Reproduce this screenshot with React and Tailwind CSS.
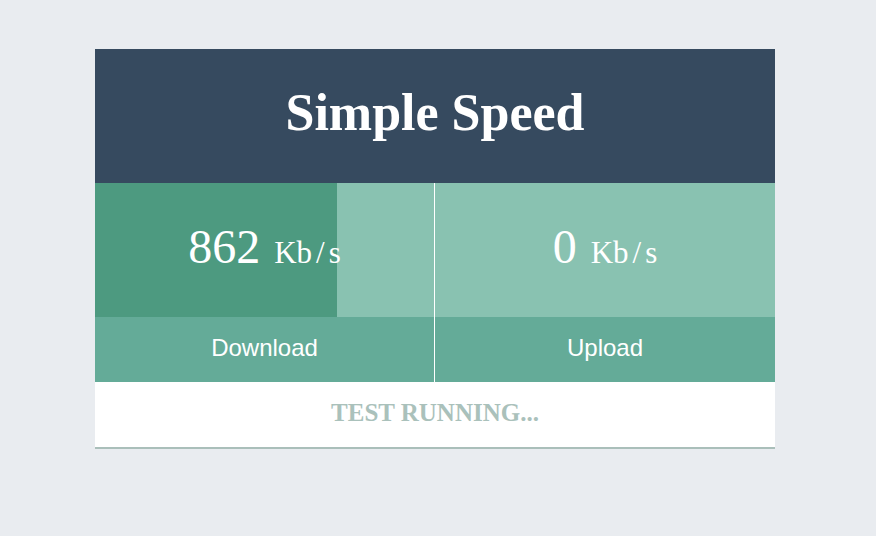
export default function App() {
  const progress = 242 // px of 339 download cell
  const Unit = () => (
    <span className="text-[31px] leading-none ml-[14px]">
      Kb<span className="mx-[4px]">/</span>s
    </span>
  )
  return (
    <div className="min-h-[536px] w-full bg-[#e9ecf0] pt-[49px]" style={{ fontFamily: '"Liberation Serif", serif' }}>
      <div className="w-[680px] ml-[95px]">
        {/* header */}
        <div className="h-[134px] bg-[#364a5f] flex items-center justify-center">
          <h1 className="text-white font-bold text-[52px] leading-none pb-[6px]">Simple Speed</h1>
        </div>

        {/* stats */}
        <div className="flex">
          <div className="w-[339px] flex flex-col">
            <div className="relative h-[134px] bg-[#89c2b1]">
              <div className="absolute left-0 top-0 h-full bg-[#4d9a80]" style={{ width: progress }} />
              <div className="relative h-full flex items-baseline justify-center text-white pt-[40px]">
                <span className="text-[48px] leading-none">862</span>
                <Unit />
              </div>
            </div>
            <div className="h-[65px] bg-[#64ab98] flex items-center justify-center text-white text-[24px] pb-[3px]" style={{ fontFamily: '"Liberation Sans", sans-serif' }}>
              Download
            </div>
          </div>
          <div className="w-px bg-white" />
          <div className="flex-1 flex flex-col">
            <div className="h-[134px] bg-[#89c2b1] flex items-baseline justify-center text-white pt-[40px]">
              <span className="text-[48px] leading-none">0</span>
              <Unit />
            </div>
            <div className="h-[65px] bg-[#64ab98] flex items-center justify-center text-white text-[24px] pb-[3px]" style={{ fontFamily: '"Liberation Sans", sans-serif' }}>
              Upload
            </div>
          </div>
        </div>

        {/* footer */}
        <div className="h-[67px] bg-white border-b-2 border-[#aabfba] flex items-center justify-center pb-[5px]">
          <span className="text-[#aac1bb] font-bold text-[25px] leading-none">TEST RUNNING...</span>
        </div>
      </div>
    </div>
  )
}
